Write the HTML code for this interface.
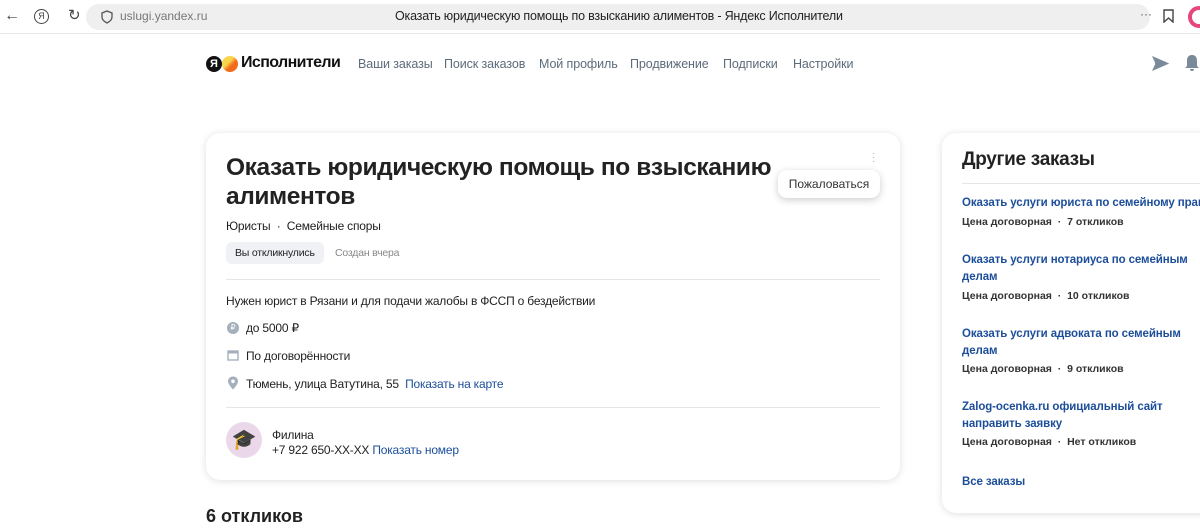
<!DOCTYPE html>
<html><head><meta charset="utf-8"><style>
*{margin:0;padding:0;box-sizing:border-box}
body{width:1200px;height:530px;overflow:hidden;background:#fff;font-family:"Liberation Sans","Noto Sans CJK SC",sans-serif;color:#222;position:relative}
.a{position:absolute;white-space:nowrap}
.bar{position:absolute;left:0;top:0;width:1200px;height:34px;border-bottom:1px solid #e6e6e6;background:#fff}
.url{position:absolute;left:86px;top:4px;width:1064px;height:26px;border-radius:13px;background:#efeff0}
.nav{font-size:12.5px;color:#5c6b7a;top:57px;letter-spacing:-0.1px}
.card{position:absolute;background:#fff;border-radius:14px;box-shadow:0 1px 8px rgba(0,0,0,.13)}
.hr{position:absolute;height:1px;background:#e5e5e5}
.lnk{color:#1d4e9a}
.t{font-size:12px;color:#222;letter-spacing:-0.2px}
.o{font-size:11.5px;font-weight:bold;color:#1d4e9a;line-height:17px;white-space:normal;width:240px;letter-spacing:-0.1px}
.m{font-size:10.5px;font-weight:bold;color:#333}
</style></head><body>
<div class="bar">
<div class="a" style="left:4px;top:7px;font-size:16px;color:#444">←</div>
<div class="a" style="left:34px;top:9px;width:15px;height:15px;border:1.5px solid #444;border-radius:50%;font-size:9px;text-align:center;line-height:12px;color:#444">Я</div>
<div class="a" style="left:68px;top:6px;font-size:15px;color:#444">↻</div>
<div class="url"></div>
<svg class="a" style="left:101px;top:10px" width="12" height="14"><path d="M6 1 L11 3 V7 C11 10 8 12 6 13 C4 12 1 10 1 7 V3Z" fill="none" stroke="#555" stroke-width="1.3"/></svg>
<div class="a" style="left:120px;top:9px;font-size:12px;color:#777">uslugi.yandex.ru</div>
<div class="a" style="left:395px;top:9px;font-size:12.5px;color:#222;letter-spacing:-0.2px">Оказать юридическую помощь по взысканию алиментов - Яндекс Исполнители</div>
<div class="a" style="left:1140px;top:7px;font-size:12px;color:#555">···</div>
<svg class="a" style="left:1163px;top:9px" width="11" height="14"><path d="M1 1H10V13L5.5 9L1 13Z" fill="none" stroke="#444" stroke-width="1.4"/></svg>
<div class="a" style="left:1188px;top:6px;width:22px;height:22px;border-radius:50%;border:4px solid #e8457a"></div>
</div>
<div class="a" style="left:206px;top:56px;width:16px;height:16px;border-radius:50%;background:#111;color:#fff;font-size:11px;font-weight:bold;text-align:center;line-height:16px">Я</div>
<div class="a" style="left:222px;top:56px;width:16px;height:16px;border-radius:50%;background:linear-gradient(135deg,#f9d44a 40%,#f26a1b 60%)"></div>
<div class="a" style="left:241px;top:54px;font-size:16px;font-weight:bold;color:#111;letter-spacing:-0.6px">Исполнители</div>
<div class="a nav" style="left:358px">Ваши заказы</div>
<div class="a nav" style="left:444px">Поиск заказов</div>
<div class="a nav" style="left:539px">Мой профиль</div>
<div class="a nav" style="left:630px">Продвижение</div>
<div class="a nav" style="left:723px">Подписки</div>
<div class="a nav" style="left:793px">Настройки</div>
<svg class="a" style="left:1152px;top:56px" width="17" height="15"><path d="M1 1L16 7.5L1 14L4 7.5Z M3 7.5H12" fill="#7a8a9a" stroke="#7a8a9a" stroke-width="1"/></svg>
<svg class="a" style="left:1184px;top:54px" width="16" height="19"><path d="M8 1C4 1 3 4 3 7V12L1 14H15L13 12V7C13 4 12 1 8 1Z M6 15a2 2 0 0 0 4 0Z" fill="#7a8a9a"/></svg>

<div class="card" style="left:206px;top:133px;width:694px;height:347px">
<div class="a" style="left:20px;top:20px;font-size:24.5px;font-weight:bold;line-height:29px;color:#222;white-space:normal;width:580px;letter-spacing:-0.4px">Оказать юридическую помощь по взысканию алиментов</div>
<div class="a" style="left:666px;top:19px;color:#aaa;font-size:10px;line-height:4px">·<br>·<br>·</div>
<div class="a" style="left:572px;top:37px;height:28px;width:102px;border-radius:9px;background:#fff;box-shadow:0 2px 8px rgba(0,0,0,.2);font-size:12px;line-height:28px;text-align:center;color:#333">Пожаловаться</div>
<div class="a t" style="left:20px;top:86px">Юристы &nbsp;·&nbsp; Семейные споры</div>
<div class="a" style="left:20px;top:109px;height:22px;padding:0 9px;border-radius:6px;background:#eff1f4;font-size:10.5px;line-height:22px;color:#222;letter-spacing:-0.2px">Вы откликнулись</div>
<div class="a" style="left:129px;top:114px;font-size:10.5px;color:#888;letter-spacing:-0.2px">Создан вчера</div>
<div class="hr" style="left:20px;top:146px;width:654px"></div>
<div class="a t" style="left:20px;top:161px">Нужен юрист в Рязани и для подачи жалобы в ФССП о бездействии</div>
<div class="a" style="left:21px;top:189px;width:12px;height:12px;border-radius:50%;background:#a4b0bc;color:#fff;font-size:8px;text-align:center;line-height:12px">₽</div>
<div class="a t" style="left:40px;top:188px">до 5000 ₽</div>
<svg class="a" style="left:21px;top:216px" width="12" height="12"><rect x="1" y="2" width="10" height="9" fill="none" stroke="#a4b0bc" stroke-width="1.4"/><rect x="1" y="2" width="10" height="2.5" fill="#a4b0bc"/></svg>
<div class="a t" style="left:40px;top:216px">По договорённости</div>
<svg class="a" style="left:21px;top:243px" width="12" height="14"><path d="M6 0.5C3 0.5 1 2.6 1 5.3C1 8.5 6 13.5 6 13.5C6 13.5 11 8.5 11 5.3C11 2.6 9 0.5 6 0.5Z" fill="#a4b0bc"/><circle cx="6" cy="5.3" r="1.8" fill="#fff"/></svg>
<div class="a t" style="left:40px;top:244px">Тюмень, улица Ватутина, 55 &nbsp;<span class="lnk">Показать на карте</span></div>
<div class="hr" style="left:20px;top:274px;width:654px"></div>
<div class="a" style="left:20px;top:289px;width:36px;height:36px;border-radius:50%;background:#ead8ea;text-align:center;line-height:36px;font-size:20px">🎓</div>
<div class="a t" style="left:66px;top:295px">Филина</div>
<div class="a t" style="left:66px;top:310px">+7 922 650-XX-XX <span class="lnk">Показать номер</span></div>
</div>
<div class="a" style="left:206px;top:506px;font-size:18px;font-weight:bold;color:#222">6 откликов</div>

<div class="card" style="left:942px;top:133px;width:280px;height:380px">
<div class="a" style="left:20px;top:16px;font-size:19px;font-weight:bold;color:#222;letter-spacing:-0.3px">Другие заказы</div>
<div class="hr" style="left:20px;top:50px;width:260px"></div>
<div class="a o" style="left:20px;top:62px;white-space:nowrap">Оказать услуги юриста по семейному праву</div>
<div class="a m" style="left:20px;top:83px">Цена договорная &nbsp;·&nbsp; 7 откликов</div>
<div class="a o" style="left:20px;top:119px">Оказать услуги нотариуса по семейным делам</div>
<div class="a m" style="left:20px;top:157px">Цена договорная &nbsp;·&nbsp; 10 откликов</div>
<div class="a o" style="left:20px;top:193px">Оказать услуги адвоката по семейным делам</div>
<div class="a m" style="left:20px;top:230px">Цена договорная &nbsp;·&nbsp; 9 откликов</div>
<div class="a o" style="left:20px;top:266px">Zalog-ocenka.ru официальный сайт направить заявку</div>
<div class="a m" style="left:20px;top:303px">Цена договорная &nbsp;·&nbsp; Нет откликов</div>
<div class="a o" style="left:20px;top:341px">Все заказы</div>
</div>
</body></html>
